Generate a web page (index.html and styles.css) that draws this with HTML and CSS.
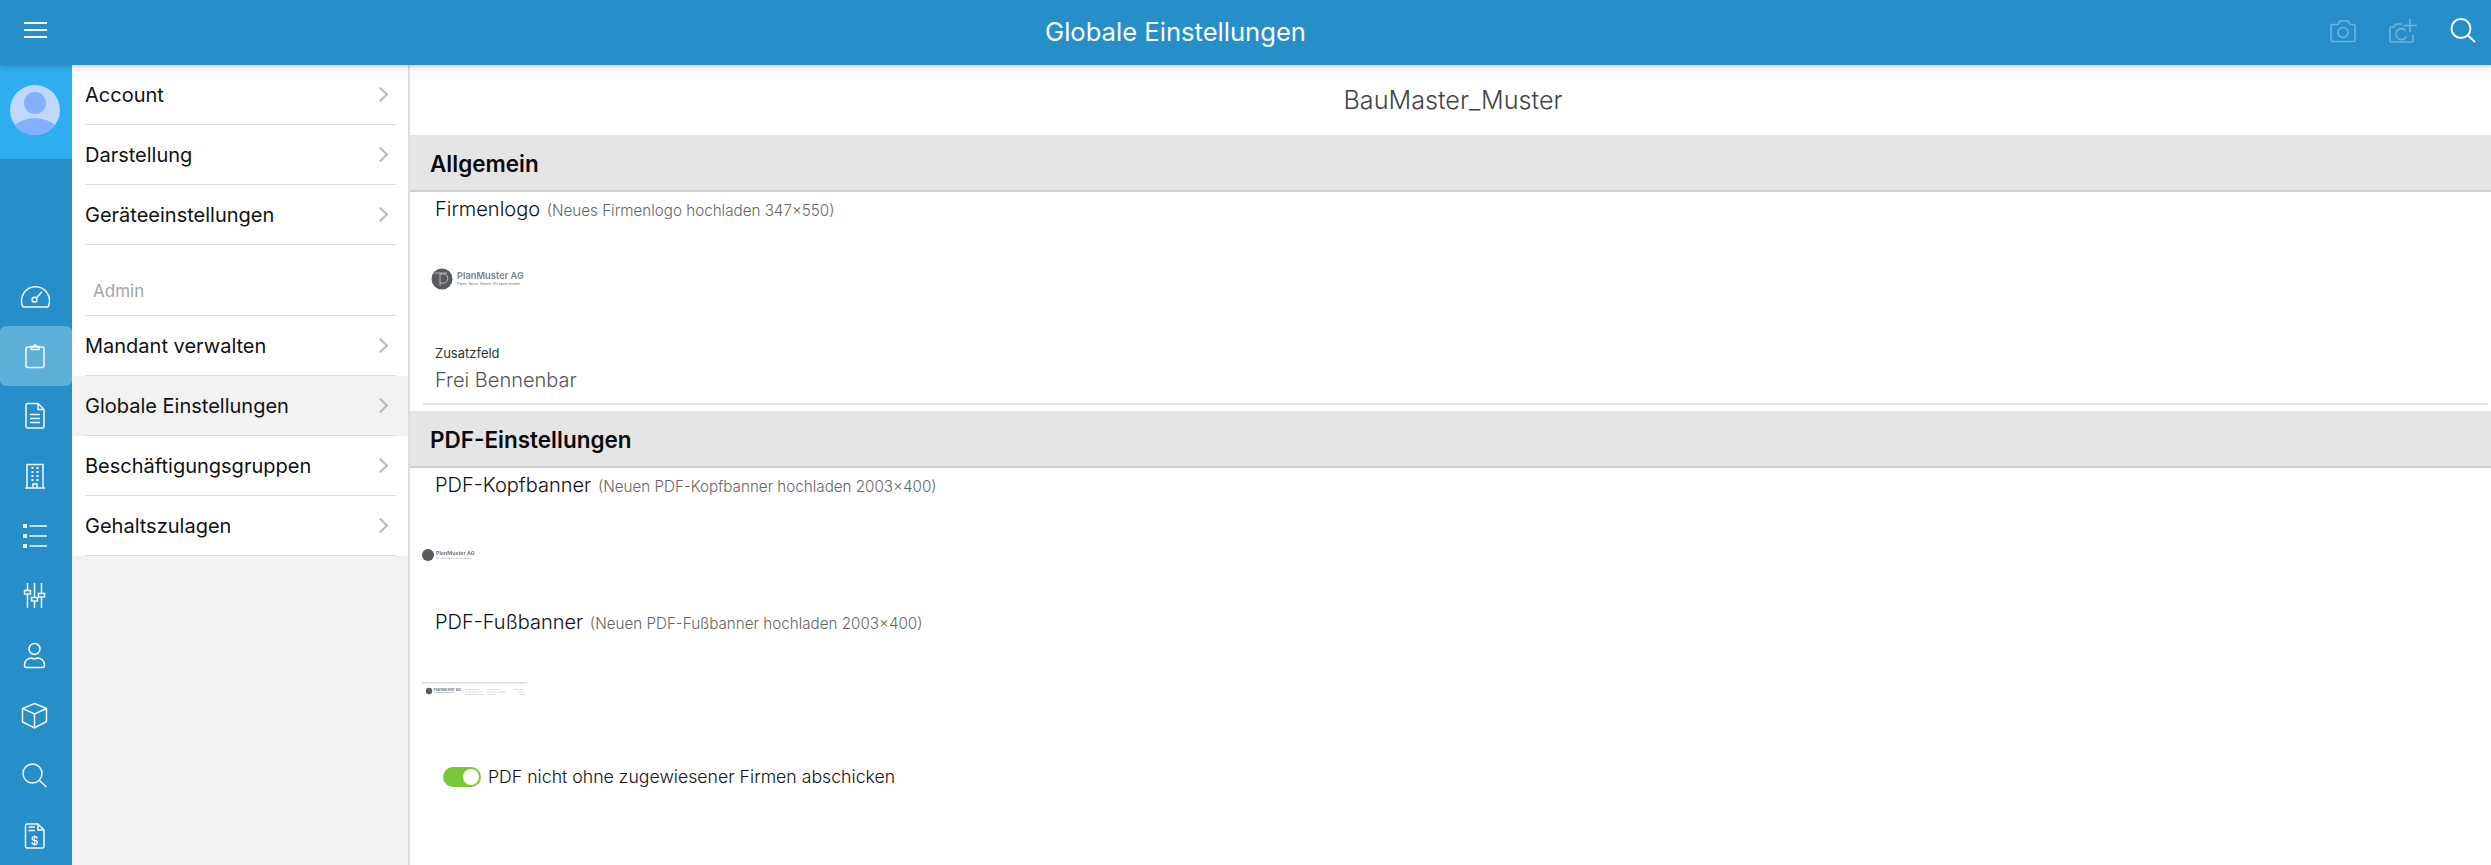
FILE: index.html
```html
<!DOCTYPE html>
<html lang="de">
<head>
    <meta charset="UTF-8">
    <title>Globale Einstellungen</title>
    <link rel="stylesheet" href="styles.css">
</head>
<body>

    <header class="topbar">
        <div class="menu-btn"><span></span><span></span><span></span></div>
        <h1 class="topbar-title">Globale Einstellungen</h1>
        <div class="topbar-icons">
            <svg class="dim" width="28" height="26" viewBox="0 0 28 26"><path d="M3.5 6.5 H9 L11 3 H19 L21 6.5 H24.5 A1.5 1.5 0 0 1 26 8 V22 A1.5 1.5 0 0 1 24.5 23.5 H3.5 A1.5 1.5 0 0 1 2 22 V8 A1.5 1.5 0 0 1 3.5 6.5 Z"/><circle cx="14" cy="14.5" r="5"/></svg>
            <svg class="dim" width="30" height="26" viewBox="0 0 30 26"><path d="M14 6 H8 L6 9 H3.5 A1.5 1.5 0 0 0 2 10.5 V23 A1 1 0 0 0 3 24 H24 A1 1 0 0 0 25 23 V17"/><path d="M17.5 12.5 A5.5 5.5 0 1 0 18.5 18"/><path d="M22 1 V14 M15.5 7.5 H29"/></svg>
            <svg class="bright" width="28" height="28" viewBox="0 0 28 28"><circle cx="12" cy="11.5" r="9.5"/><path d="M19 18.5 L26 25"/></svg>
        </div>
    </header>

    <div class="layout">
        <nav class="rail">
            <div class="avatar-tile">
                <svg width="50" height="50" viewBox="0 0 50 50"><circle cx="25" cy="25" r="25" fill="#bfd8ff"/><circle cx="25" cy="18" r="11" fill="#84aeff"/><path d="M5 40 C15 31 35 31 45 40 C40 46 33 50 25 50 C17 50 10 46 5 40 Z" fill="#84aeff"/></svg>
            </div>
            <div class="rail-items">
                <div class="rail-item"><svg width="30" height="30" viewBox="0 0 30 30"><path d="M2.5 25 A14 14 0 1 1 28.5 25 Q28.2 26 27 26 H4 Q2.8 26 2.5 25 Z"/><circle cx="14.5" cy="18.7" r="2.4"/><path d="M16.3 17 L22 10.7"/></svg></div>
                <div class="rail-item active"><svg width="30" height="30" viewBox="0 0 30 30"><rect x="6" y="6" width="18" height="20.5" rx="2"/><path d="M11 8.5 V5.5 H13.5 A1.5 1.5 0 0 1 16.5 5.5 H19 V8.5 Z"/></svg></div>
                <div class="rail-item"><svg width="30" height="30" viewBox="0 0 30 30"><path d="M7.5 2.5 H18 L24 8.5 V25.5 A1.5 1.5 0 0 1 22.5 27 H7.5 A1.5 1.5 0 0 1 6 25.5 V4 A1.5 1.5 0 0 1 7.5 2.5 Z"/><path d="M18 2.5 V8.5 H24 M10 13.5 H20 M10 17.5 H20 M10 21.5 H20"/></svg></div>
                <div class="rail-item"><svg width="30" height="30" viewBox="0 0 30 30"><path d="M5 27 H25 M7 27 V3.5 H23 V27 M13 27 V23 H17 V27"/><path class="thick" d="M11.5 7 H13.5 M16.5 7 H18.5 M11.5 11 H13.5 M16.5 11 H18.5 M11.5 15 H13.5 M16.5 15 H18.5 M11.5 19 H13.5 M16.5 19 H18.5"/></svg></div>
                <div class="rail-item"><svg width="30" height="30" viewBox="0 0 30 30"><path d="M9.5 5 H27 M9.5 15 H27 M9.5 25 H27"/><path class="fill" d="M3 3 H7 V7 H3 Z M3 13 H7 V17 H3 Z M3 23 H7 V27 H3 Z"/></svg></div>
                <div class="rail-item"><svg width="30" height="30" viewBox="0 0 30 30"><path d="M7.5 2 V9.5 M7.5 13 V27 M14.5 2 V16.5 M14.5 20 V27 M21.5 2 V12.5 M21.5 16 V27"/><rect x="4.5" y="9.5" width="6" height="3.5"/><rect x="11.5" y="16.5" width="6" height="3.5"/><rect x="18.5" y="12.5" width="6" height="3.5"/></svg></div>
                <div class="rail-item"><svg width="30" height="30" viewBox="0 0 30 30"><circle cx="14.5" cy="8" r="5.5"/><path d="M4.5 24 C4.5 19.5 8 17 11.5 17 Q14.5 18.5 17.5 17 C21 17 24.5 19.5 24.5 24 Q24.5 26.5 22.5 26.5 H6.5 Q4.5 26.5 4.5 24 Z"/></svg></div>
                <div class="rail-item"><svg width="30" height="30" viewBox="0 0 30 30"><path d="M14.5 2.5 L26.5 7.5 V20.5 L14.5 27 L2.5 21 V7.5 Z M2.5 7.5 L14.5 13 L26.5 7.5 M14.5 13 V27"/></svg></div>
                <div class="rail-item"><svg width="30" height="30" viewBox="0 0 30 30"><circle cx="12.5" cy="12.5" r="9.5"/><path d="M19.5 19.5 L26.5 26"/></svg></div>
                <div class="rail-item"><svg width="30" height="30" viewBox="0 0 30 30"><path d="M7 3 H18 L24 9 V25.5 A1.5 1.5 0 0 1 22.5 27 H7 A1.5 1.5 0 0 1 5.5 25.5 V4.5 A1.5 1.5 0 0 1 7 3 Z"/><path d="M18 3 V9 H24 M8.5 6 H15 M8.5 9.5 H15"/><text x="14.7" y="23.5" class="dollar">$</text></svg></div>
            </div>
        </nav>

        <aside class="panel">
            <ul class="menu">
                <li><div class="menu-row">Account<i class="chevron"></i></div></li>
                <li><div class="menu-row">Darstellung<i class="chevron"></i></div></li>
                <li><div class="menu-row">Geräteeinstellungen<i class="chevron"></i></div></li>
            </ul>
            <div class="menu-heading"><span>Admin</span></div>
            <ul class="menu">
                <li><div class="menu-row">Mandant verwalten<i class="chevron"></i></div></li>
                <li class="current"><div class="menu-row">Globale Einstellungen<i class="chevron"></i></div></li>
                <li><div class="menu-row">Beschäftigungsgruppen<i class="chevron"></i></div></li>
                <li><div class="menu-row">Gehaltszulagen<i class="chevron"></i></div></li>
            </ul>
        </aside>

        <main class="content">
            <div class="tenant">BauMaster_Muster</div>

            <h2 class="section-bar">Allgemein</h2>
            <div class="field-label">Firmenlogo <small>(Neues Firmenlogo hochladen 347×550)</small></div>
            <svg class="logo-main" width="96" height="24" viewBox="0 0 96 24">
                <circle cx="11" cy="12" r="10.5" fill="#565b60"/>
                <path d="M4 6 H16 M9 6 V19 M9 7 H14 A5 5 0 0 1 14 16 H9" fill="none" stroke="#b4b9bd" stroke-width="1"/>
                <text x="26" y="11.5" class="logo-name">PlanMuster AG</text>
                <text x="26" y="18" class="logo-tag">Planen. Bauen. Steuern. Wir bauen smarter.</text>
            </svg>
            <div class="extra-field">
                <label>Zusatzfeld</label>
                <div class="extra-value">Frei Bennenbar</div>
            </div>

            <h2 class="section-bar">PDF-Einstellungen</h2>
            <div class="field-label">PDF-Kopfbanner <small>(Neuen PDF-Kopfbanner hochladen 2003×400)</small></div>
            <svg class="logo-head" width="54" height="14" viewBox="0 0 54 14">
                <circle cx="6" cy="7" r="6" fill="#565b60"/>
                <text x="14" y="6.5" class="logo-name small">PlanMuster AG</text>
                <text x="14" y="11" class="logo-tag small">Planen. Bauen. Steuern. Wir bauen smarter.</text>
            </svg>
            <div class="field-label foot">PDF-Fußbanner <small>(Neuen PDF-Fußbanner hochladen 2003×400)</small></div>
            <svg class="logo-foot" width="106" height="16" viewBox="0 0 106 16">
                <rect x="0" y="0" width="105" height="1.5" fill="#dcdcdc"/>
                <circle cx="7" cy="9" r="3.2" fill="#565b60"/>
                <text x="11.5" y="9" class="logo-name tiny">PlanMuster AG</text>
                <rect x="12" y="10" width="20" height="1" fill="#c8ccd0"/>
                <path d="M43 7.5 H57 M43 10 H60 M43 12.5 H61 M65 7.5 H79 M65 10 H84 M65 12.5 H74 M92 7.5 H101 M95 10 H103 M98 12.5 H103" stroke="#dedede" stroke-width="1"/>
            </svg>
            <div class="toggle-row">
                <span class="toggle"><span class="knob"></span></span>
                PDF nicht ohne zugewiesener Firmen abschicken
            </div>
        </main>
    </div>

</body>
</html>
```

FILE: styles.css
```css
* {
    box-sizing: border-box;
}

html, body {
    height: 100%;
}

body {
    font-family: Inter, "Liberation Sans", sans-serif;
    margin: 0;
    background: #ffffff;
    color: #111;
    overflow: hidden;
    display: flex;
    flex-direction: column;
}

.topbar {
    height: 65px;
    flex: none;
    background: #268fc9;
    display: flex;
    align-items: center;
    box-shadow: 0px 2px 5px rgba(0, 0, 0, 0.2);
    position: relative;
    z-index: 2;
}

.menu-btn {
    width: 72px;
    padding-right: 2px;
    display: flex;
    flex-direction: column;
    align-items: center;
    gap: 5px;
    margin-top: -5px;
}

.menu-btn span {
    width: 23px;
    height: 2px;
    background: #fff;
}

.topbar-title {
    flex: 1;
    margin: -2px 0 0;
    text-align: center;
    color: #fff;
    font-size: 25.6px;
    font-weight: 400;
}

.topbar-icons {
    width: 212px;
    padding: 0 14px 4px 50px;
    display: flex;
    justify-content: space-between;
    align-items: center;
}

.topbar-icons svg {
    fill: none;
    stroke-width: 1.6;
}

.topbar-icons .dim {
    stroke: #6db4dc;
}

.topbar-icons .bright {
    stroke: #fff;
    stroke-width: 2;
}

.layout {
    flex: 1;
    display: flex;
    min-height: 0;
}

.rail {
    width: 72px;
    flex: none;
    background: #268fc9;
}

.avatar-tile {
    height: 94px;
    background: #2eaef0;
    padding: 20px 0 0 10px;
}

.rail-items {
    margin-top: 107px;
}

.rail-item {
    height: 60px;
    padding-right: 2px;
    display: flex;
    align-items: center;
    justify-content: center;
    border-radius: 6px;
}

.rail-item svg {
    fill: none;
    stroke: #fff;
    stroke-width: 1.5;
    opacity: 0.95;
}

.rail-item .thick {
    stroke-width: 2;
}

.rail-item .fill {
    fill: #fff;
    stroke: none;
}

.rail-item .dollar {
    fill: #fff;
    stroke: none;
    font-size: 12px;
    font-weight: 600;
    text-anchor: middle;
}

.rail-item.active {
    background: #5fafdb;
}

.panel {
    width: 338px;
    flex: none;
    background: #f2f2f2;
    border-right: 2px solid #dedede;
}

.menu {
    list-style: none;
    margin: 0;
    padding: 0;
    background: #ffffff;
}

.menu li {
    padding: 0 12px 0 13px;
}

.menu li.current {
    background: #f2f2f2;
}

.menu-row {
    height: 60px;
    border-bottom: 1px solid #dcdcdc;
    display: flex;
    align-items: center;
    justify-content: space-between;
    font-size: 20px;
    color: #111;
}

.chevron {
    width: 11px;
    height: 11px;
    margin-right: 10px;
    border-top: 2px solid #bbb;
    border-right: 2px solid #bbb;
    transform: rotate(45deg);
}

.menu-heading {
    height: 71px;
    background: #ffffff;
    margin: 0;
    padding: 36px 0 0 13px;
}

.menu-heading span {
    display: block;
    height: 35px;
    width: 311px;
    border-bottom: 1px solid #dcdcdc;
    padding-left: 8px;
    color: #a5a5a5;
    font-size: 17px;
}

.content {
    flex: 1;
    min-width: 0;
}

.tenant {
    height: 70px;
    padding-left: 5px;
    line-height: 70px;
    text-align: center;
    font-size: 25.2px;
    font-weight: 300;
    color: #444;
}

.section-bar {
    height: 57px;
    margin: 0;
    padding: 0 20px 0 20px;
    line-height: 57px;
    background: #e5e5e5;
    border-bottom: 2px solid #cfcfcf;
    font-size: 22.5px;
    font-weight: 600;
    color: #0a0a0a;
}

.field-label {
    padding-left: 25px;
    height: 36px;
    line-height: 35px;
    font-size: 20px;
    color: #111;
    font-weight: 300;
}

.field-label small {
    margin-left: 1px;
    font-size: 15.2px;
    color: #666;
}

.logo-main {
    display: block;
    margin: 39px 0 0 21px;
    filter: blur(0.3px);
}

.logo-name {
    font-size: 9.2px;
    font-weight: 700;
    fill: #7d8b96;
}

.logo-name.small {
    font-size: 5.3px;
    fill: #6d7a84;
}

.logo-name.tiny {
    font-size: 3.8px;
    fill: #6d7a84;
}

.logo-tag {
    font-size: 3.1px;
    fill: #6f6f6f;
}

.logo-tag.small {
    font-size: 1.7px;
    fill: #8b8b8b;
}

.extra-field {
    margin: 53px 3px 0 13px;
    height: 61px;
    padding-left: 12px;
    border-bottom: 2px solid #e2e2e2;
}

.extra-field label {
    display: block;
    font-size: 13px;
    line-height: 18px;
    color: #333;
}

.extra-value {
    margin-top: 6px;
    font-size: 20px;
    font-weight: 300;
    line-height: 24px;
    color: #555;
}

.extra-field + .section-bar {
    margin-top: 6px;
}

.logo-head {
    display: block;
    margin: 44px 0 0 12px;
    filter: blur(0.3px);
}

.field-label.foot {
    margin-top: 43px;
}

.logo-foot {
    display: block;
    margin: 41px 0 0 12px;
    filter: blur(0.3px);
}

.toggle-row {
    margin: 68px 0 0 33px;
    display: flex;
    align-items: center;
    gap: 7px;
    font-size: 17.7px;
    font-weight: 300;
    color: #111;
}

.toggle {
    width: 38px;
    height: 20px;
    border-radius: 10px;
    background: #7ac735;
    display: flex;
    justify-content: flex-end;
    align-items: center;
    padding-right: 2px;
}

.knob {
    width: 16px;
    height: 16px;
    border-radius: 50%;
    background: #fff;
}
```
